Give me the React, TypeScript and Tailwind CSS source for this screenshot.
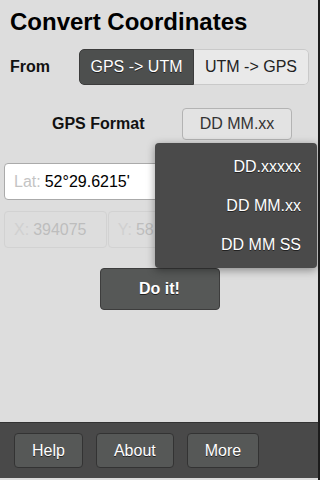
import React from "react";

const font = { fontFamily: '"Liberation Sans", Arial, sans-serif' };

function FooterButton({ label }: { label: string }) {
  return (
    <button className="h-[35px] px-[17px] rounded-[4px] border border-[#333333] bg-[#565857] text-white text-[16px] [text-shadow:0_1px_0_#222]">
      {label}
    </button>
  );
}

export default function App() {
  const formats = ["DD.xxxxx", "DD MM.xx", "DD MM SS"];

  return (
    <div style={font} className="w-[320px] h-[480px] flex flex-col bg-[#dddddd] border-r-2 border-[#1c1c1c] overflow-hidden">
      <div className="relative flex-1">
        <h1 className="pl-[10px] pt-[8px] text-[24px] leading-[28px] font-bold text-black">Convert Coordinates</h1>

        <div className="flex items-center mt-[13px] pl-[10px]">
          <span className="w-[69px] text-[16px] font-bold text-[#111]">From</span>
          <div className="flex h-[36px] rounded-[5px] overflow-hidden">
            <button className="w-[115px] bg-[#4d4f4e] border border-[#3c3c3c] rounded-l-[5px] text-white text-[16px] [text-shadow:0_1px_0_#222]">
              GPS -&gt; UTM
            </button>
            <button className="w-[115px] bg-[#e9e9e9] border border-[#c9c9c9] border-l-0 rounded-r-[5px] text-[#222] text-[16px]">
              UTM -&gt; GPS
            </button>
          </div>
        </div>

        <div className="flex items-center mt-[23px]">
          <span className="w-[182px] pl-[52px] text-[16px] font-bold text-[#111]">GPS Format</span>
          <button className="w-[110px] h-[32px] rounded-[4px] border border-[#b3b3b3] bg-[#e3e3e3] text-[16px] text-[#333]">
            DD MM.xx
          </button>
        </div>

        <div className="mt-[23px] mx-[4px] h-[37px] flex items-center px-[9px] bg-white border border-[#aaaaaa] rounded-[4px] text-[16px]">
          <span className="text-[#c4c4c4]">Lat:</span>
          <span className="ml-[4px] text-black">52°29.6215'</span>
        </div>

        <div className="mt-[11px] mx-[4px] grid grid-cols-3 gap-[1px]">
          <div className="h-[37px] flex items-center px-[9px] border border-[#d2d2d2] rounded-[4px] text-[16px] text-[#bdbdbd]">
            <span className="text-[#d0d0d0]">X:</span>
            <span className="ml-[4px]">394075</span>
          </div>
          <div className="h-[37px] flex items-center px-[9px] border border-[#d2d2d2] rounded-[4px] text-[16px] text-[#bdbdbd]">
            <span className="text-[#d0d0d0]">Y:</span>
            <span className="ml-[4px]">58</span>
          </div>
          <div className="h-[37px] border border-[#d2d2d2] rounded-[4px]" />
        </div>

        <div className="flex justify-center mt-[20px] pl-[1px]">
          <button className="w-[120px] h-[42px] rounded-[4px] border border-[#3d3d3d] bg-[#565857] text-white text-[16px] font-bold [text-shadow:0_1px_0_#222]">
            Do it!
          </button>
        </div>

        <div className="absolute left-[155px] top-[143px] w-[162px] py-[4px] rounded-[4px] bg-[#4a4a4a] shadow-[0_2px_8px_rgba(0,0,0,0.4)]">
          {formats.map((f) => (
            <div key={f} className="h-[39px] flex items-center justify-end pr-[16px] text-white text-[16px] [text-shadow:0_1px_0_#222]">
              {f}
            </div>
          ))}
        </div>
      </div>

      <div className="h-[56px] flex items-center gap-[13px] pl-[14px] bg-[#494949] border-t border-[#333333]">
        <FooterButton label="Help" />
        <FooterButton label="About" />
        <FooterButton label="More" />
      </div>
      <div className="h-[2px] bg-[#dddddd]" />
    </div>
  );
}
